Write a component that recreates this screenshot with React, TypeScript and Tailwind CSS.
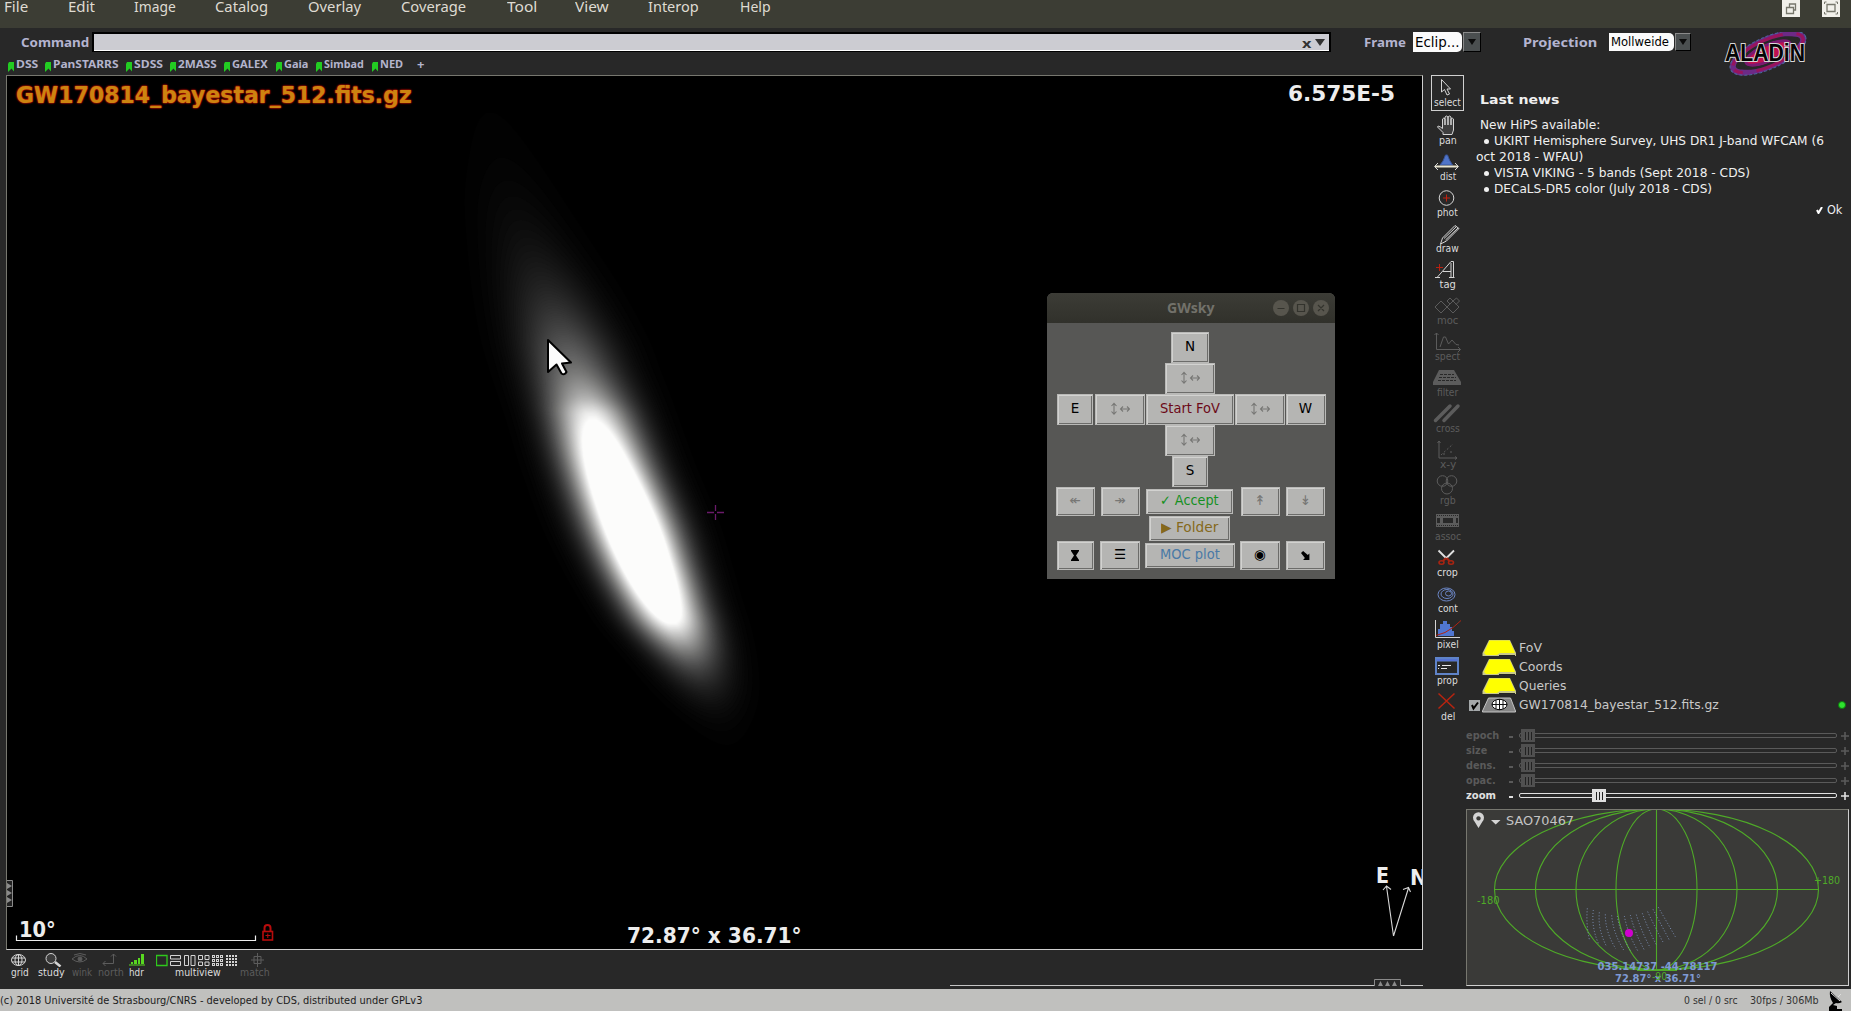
import { useLayoutEffect, useRef, useState } from "react";
import type { ReactNode } from "react";

/* Single line of text stretched to an exact width. */
function Fit({ w, className = "", children }: { w: number; className?: string; children: ReactNode }) {
  const ref = useRef<HTMLSpanElement>(null);
  const [k, setK] = useState(1);
  useLayoutEffect(() => {
    if (ref.current && ref.current.offsetWidth) setK(w / ref.current.offsetWidth);
  }, [w]);
  return (
    <span className={`block shrink-0 whitespace-nowrap ${className}`} style={{ width: w }}>
      <span ref={ref} className="inline-block origin-left align-top" style={{ transform: `scaleX(${k})` }}>
        {children}
      </span>
    </span>
  );
}

const MENU: [string, number, number][] = [
  ["File", 64, 24], ["Edit", 66, 27], ["Image", 81, 42], ["Catalog", 93, 53], ["Overlay", 93, 53],
  ["Coverage", 106, 65], ["Tool", 68, 30], ["View", 73, 34], ["Interop", 92, 51], ["Help", 60, 31],
];

function MenuBar() {
  return (
    <div className="flex h-7 shrink-0 bg-[#3c3d34] pl-1 font-['Noto_Sans',sans-serif] text-[14.500px] leading-[13px] text-[#dfdbd2]">
      {MENU.map(([t, cell, w]) => (
        <div key={t} className="shrink-0" style={{ width: cell }}>
          <Fit w={w}>{t}</Fit>
        </div>
      ))}
      <div className="ml-auto flex gap-[22px] pr-[11px]">
        <svg width="18" height="17" className="bg-[#f1f0ea]">
          <path d="M4.500 7.500h7v6h-7zM7.500 7v-3h6v6h-2" fill="none" stroke="#77776c" strokeWidth="1.300" />
        </svg>
        <svg width="18" height="17" className="bg-[#f1f0ea]">
          <path d="M5 4.500h8v7h-8z" fill="none" stroke="#77776c" strokeWidth="1.300" />
          <path d="M2.500 4v-2h2M13.500 2h2v2M15.500 12v2h-2M4.500 14h-2v-2" fill="none" stroke="#77776c" />
        </svg>
      </div>
    </div>
  );
}

const MARKS: [string, number, number][] = [
  ["DSS", 22, 37], ["PanSTARRS", 66, 81], ["SDSS", 29, 44], ["2MASS", 39, 54],
  ["GALEX", 36, 52], ["Gaia", 24, 40], ["Simbad", 40, 56], ["NED", 23, 45],
];

function Combo({ text, w, tw, small }: { text: string; w: number; tw: number; small?: boolean }) {
  return (
    <div className={`flex gap-px font-['DejaVu_Sans',sans-serif] font-normal text-black ${small ? "h-[18px] text-[12px] leading-[18px]" : "h-5 text-[14px] leading-5"}`}>
      <div className="rounded-r-[5px] bg-[#fbfbfb] pl-[2px]" style={{ width: w }}>
        <Fit w={tw}>{text}</Fit>
      </div>
      <div className={`flex items-center justify-center border border-[#8a8a8a] border-r-black border-b-black bg-[#4b4f50] ${small ? "w-4" : "w-[18px]"}`}>
        <svg width="8" height="6"><path d="M0 0h8l-4 6z" fill="#0c0c0c" /></svg>
      </div>
    </div>
  );
}

function Logo() {
  return (
    <svg width="84" height="46" viewBox="0 0 84 46" className="mt-1">
      <g transform="rotate(-24 45 21)" fill="none">
        <ellipse cx="45" cy="21" rx="38" ry="13" stroke="#6d2a86" strokeWidth="6" />
        <ellipse cx="45" cy="21" rx="38" ry="13" stroke="#98145c" strokeWidth="3" strokeDasharray="60 14 9 5" />
        <ellipse cx="45" cy="21" rx="41" ry="16" stroke="#4a6a9c" strokeWidth="1" strokeDasharray="3 2" />
        <ellipse cx="45" cy="21" rx="24" ry="8" fill="#c01050" stroke="#7a1a70" strokeWidth="3" />
        <ellipse cx="45" cy="21" rx="31" ry="10.500" stroke="#282828" strokeWidth="2" />
      </g>
      <text x="2" y="29" textLength="80" lengthAdjust="spacingAndGlyphs" fontFamily="Liberation Sans" fontWeight="bold" fontSize="23.500" fill="#050505" stroke="#d8d8d8" strokeWidth="2" paintOrder="stroke">
        ALADiN
      </text>
    </svg>
  );
}

function Header() {
  return (
    <div className="flex h-[47px] shrink-0">
      <div className="flex w-[1723px] flex-col">
        <div className="flex h-[29px] pt-1 pl-[21px] font-['Noto_Sans',sans-serif] text-[13px] font-bold leading-5 text-[#b4b4d0]">
          <Fit w={68}>Command</Fit>
          <div className="ml-[3px] flex h-5 w-[1239px] items-center justify-end gap-[3px] border-2 border-b border-black bg-[#ccccd2] pr-1 text-[13px] text-[#333] shadow-[inset_0_-1px_0_#fff]">
            <Fit w={10} className="leading-[14px]">x</Fit>
            <svg width="10" height="7"><path d="M0 0h10l-5 7z" fill="#333" /></svg>
          </div>
          <Fit w={42} className="ml-[33px]">Frame</Fit>
          <div className="ml-[7px]"><Combo text="Eclip..." w={49} tw={45} /></div>
          <Fit w={74} className="ml-[42px]">Projection</Fit>
          <div className="mt-px ml-3"><Combo text="Mollweide" w={65} tw={58} small /></div>
        </div>
        <div className="flex h-[17px] pl-2 font-['Noto_Sans',sans-serif] text-[10.500px] font-bold leading-[15px] text-[#b4b4cc]">
          {MARKS.map(([t, w, cell]) => (
            <div key={t} className="flex shrink-0 gap-[2px]" style={{ width: cell }}>
              <svg width="6" height="10" className="mt-[5px] shrink-0"><path d="M1 0h5v9.500l-2.500-3L0 10V2z" fill="#22cc22" /></svg>
              <Fit w={w}>{t}</Fit>
            </div>
          ))}
          <span className="text-[13px] leading-[14px]">+</span>
        </div>
      </div>
      <Logo />
    </div>
  );
}

/* Probability map: rows of [y, centre, sigma, amplitude], drawn as nested isophotes. */
const ROWS: [number, number, number, number][] = [
  [80, 482, 26, 0.005], [150, 500, 28, 0.014], [200, 514, 29, 0.034], [245, 530, 30, 0.072],
  [290, 547, 31, 0.15], [340, 565, 31, 0.32], [370, 575, 30, 0.47], [395, 584, 29, 0.68],
  [415, 591, 28, 0.96], [463, 607, 27.5, 1.38], [523, 630, 27.5, 1.66], [567, 647, 26.5, 1.58],
  [602, 662, 25.500, 1.3], [627, 674, 25, 0.94], [660, 691, 24, 0.38], [700, 709, 23, 0.08],
  [745, 727, 20, 0.008], [775, 738, 18, 0.002],
];

function cubic(i: number, t: number, get: (r: [number, number, number, number]) => number) {
  const p = (n: number) => ROWS[Math.max(0, Math.min(ROWS.length - 1, n))];
  const a = p(i), b = p(i + 1), z = p(i - 1), c = p(i + 2);
  const h = b[0] - a[0];
  const m0 = ((get(b) - get(z)) / (b[0] - z[0])) * h;
  const m1 = ((get(c) - get(a)) / (c[0] - a[0])) * h;
  return (2 * t ** 3 - 3 * t ** 2 + 1) * get(a) + (t ** 3 - 2 * t * t + t) * m0 + (-2 * t ** 3 + 3 * t * t) * get(b) + (t ** 3 - t * t) * m1;
}

function isophote(level: number) {
  const left: string[] = [];
  const right: string[] = [];
  for (let y = 80; y < 775; y += 1) {
    let i = 0;
    while (i < ROWS.length - 2 && ROWS[i + 1][0] <= y) i += 1;
    const t = (y - ROWS[i][0]) / (ROWS[i + 1][0] - ROWS[i][0]);
    const amp = Math.exp(cubic(i, t, (r) => Math.log(r[3])));
    if (amp <= level) continue;
    const cx = cubic(i, t, (r) => r[1]);
    const half = cubic(i, t, (r) => r[2]) * Math.sqrt(2 * Math.log(amp / level));
    left.push(`${(cx - half).toFixed(1)} ${y}`);
    right.push(`${(cx + half).toFixed(1)} ${y}`);
  }
  return left.length ? `M${left.join("L")}L${right.reverse().join("L")}Z` : "";
}

const LEVELS = Array.from({ length: 126 }, (_, n) => (n + 1) / 126);

function SkyMap() {
  return (
    <svg className="block" width="1415" height="873" viewBox="7 76 1415 873">
      {LEVELS.map((l) => {
        const v = Math.round(l * 252);
        return <path key={l} d={isophote(l)} fill={`rgb(${v},${v},${Math.round(v * 0.995)})`} />;
      })}
      <path d="M707 512.500h7M717 512.500h7M715.500 505v6M715.500 514v6" stroke="#6a1a6a" strokeWidth="1.300" />
      <path d="M548 340v32l8.500-7.500 5 9q3 2 5-1.500l-4.500-8.500 9-1z" fill="#fbfbfb" stroke="#000" strokeWidth="2" strokeLinejoin="round" />
      <path d="M16.500 935.500v5h239v-5" fill="none" stroke="#eee" strokeWidth="1.200" />
      <g fill="none" stroke="#d8d8d8" strokeWidth="1.100">
        <path d="M1393.500 936L1386.500 886.500M1383 890l3.500-4 4.500 3.500M1393.500 936L1408.500 888M1403 889.500l5.500-2 2 4.500" />
      </g>
      <g stroke="#b80c0c" fill="none">
        <path d="M264.500 931v-3a3 3 0 0 1 6 0v3" strokeWidth="2" />
        <rect x="263" y="931.500" width="9.500" height="8.500" strokeWidth="1.600" />
        <path d="M265.500 935.500h5M267.800 933.500v4.500" />
      </g>
      <path d="M7 880.500h5.500v26H7" fill="#222" stroke="#8a8a8a" />
      <path d="M7 883l5 3-5 3zM7 890l5 3-5 3zM7 897l5 3-5 3z" fill="#8a8a8a" />
    </svg>
  );
}

function Btn({ w, h, color = "text-[#777775]", className = "", children }: { w: number; h: number; color?: string; className?: string; children: ReactNode }) {
  return (
    <div
      className={`flex shrink-0 items-center justify-center border border-[#b9b9b7] bg-[#b5b5b3] pb-px shadow-[inset_1px_1px_0_#d2d2d0,inset_-1px_-1px_0_#6c6c6a] ${color} ${className}`}
      style={{ width: w, height: h }}
    >
      {children}
    </div>
  );
}

function Move() {
  return (
    <Btn w={50} h={31}>
      <svg width="20" height="14" fill="none" stroke="#777775" strokeWidth="1.100">
        <path d="M4 1.500v10M1.500 4L4 1.300 6.500 4M1.500 9.500L4 12.200 6.500 9.500M11 7h8M13 4.500L10.500 7l2.500 2.500M17 4.500L19.500 7 17 9.500" />
      </svg>
    </Btn>
  );
}

function GwSky() {
  return (
    <div className="absolute top-[217px] left-[1040px] flex h-[286px] w-[288px] flex-col overflow-hidden rounded-t-md bg-[#575755] font-['DejaVu_Sans',sans-serif] text-[13.500px] leading-none">
      <div className="relative flex h-[30px] shrink-0 items-center justify-center bg-gradient-to-b from-[#3c3c36] to-[#31312b]">
        <Fit w={48} className="mb-[2px] font-['Noto_Sans',sans-serif] text-[15px] font-bold text-[#72716a]">GWsky</Fit>
        <svg className="absolute top-[7px] right-[6px]" width="56" height="16">
          <g fill="#57554d"><circle cx="8" cy="8" r="8" /><circle cx="28" cy="8" r="8" /><circle cx="48" cy="8" r="8" /></g>
          <path d="M4.500 8.500h7M24.500 4.500h7v7h-7zM45 5l6 6M51 5l-6 6" fill="none" stroke="#33332d" strokeWidth="1.200" />
        </svg>
      </div>
      <div className="grid grid-cols-[40px_50px_90px_50px_41px] grid-rows-[31px_31px_31px_31px_31px_29px_25px_29px] place-items-center pt-[9px] pl-2">
        <i /><i /><Btn w={38} h={31} color="text-black">N</Btn><i /><i />
        <i /><i /><Move /><i /><i />
        <Btn w={36} h={31} color="text-black">E</Btn><Move />
        <Btn w={88} h={31} color="text-[#6c0a18]"><Fit w={60}>Start FoV</Fit></Btn>
        <Move /><Btn w={40} h={31} color="text-black">W</Btn>
        <i /><i /><Move /><i /><i />
        <i /><i /><Btn w={36} h={31} color="text-black">S</Btn><i /><i />
        <Btn w={39} h={29}>↞</Btn><Btn w={39} h={29}>↠</Btn>
        <Btn w={87} h={25} color="text-[#15901f]" className="mr-[2px]"><Fit w={59}>✓ Accept</Fit></Btn>
        <Btn w={39} h={29}>↟</Btn><Btn w={39} h={29}>↡</Btn>
        <i /><i /><Btn w={81} h={25} color="text-[#85691c]" className="mr-[2px]"><Fit w={57}>▶ Folder</Fit></Btn><i /><i />
        <Btn w={37} h={29} color="text-black">
          <svg width="8" height="11"><path d="M0 0h8v1L5 5.500 8 10v1H0v-1L3 5.500 0 1z" /></svg>
        </Btn>
        <Btn w={40} h={29} color="text-black">☰</Btn>
        <Btn w={90} h={25} color="text-[#4a7aa6]"><Fit w={60}>MOC plot</Fit></Btn>
        <Btn w={40} h={29} color="text-black">◉</Btn>
        <Btn w={39} h={29} color="text-black">
          <svg width="9" height="9"><path d="M0 2L2 0l4.500 4L8 2.500V9H2L3.700 7z" transform="scale(1.050 1)" /></svg>
        </Btn>
      </div>
    </div>
  );
}

function View() {
  const bold = "absolute font-['DejaVu_Sans',sans-serif] font-bold leading-6 text-[#ededed]";
  return (
    <div className="relative ml-[6px] h-[875px] w-[1417px] shrink-0 overflow-hidden border border-[#77776f] border-r-[#cfcfcf] border-b-[#cfcfcf] bg-black">
      <SkyMap />
      <div className={`${bold} top-[7px] left-[9px] text-[22.500px] text-[#cc8410]! [text-shadow:0_0_2px_#d01000,0_0_2px_#a01000,0_0_1px_#d01000]`}>
        <Fit w={396}>GW170814_bayestar_512.fits.gz</Fit>
      </div>
      <div className={`${bold} top-[6px] left-[1281px] text-[22px]`}><Fit w={107}>6.575E-5</Fit></div>
      <div className={`${bold} top-[842px] left-[12px] text-[20.500px]`}><Fit w={37}>10°</Fit></div>
      <div className={`${bold} top-[848px] left-[620px] text-[20.500px]`}><Fit w={175}>72.87° x 36.71°</Fit></div>
      <div className={`${bold} top-[788px] left-[1369px] text-[20.500px]`}><Fit w={13}>E</Fit></div>
      <div className={`${bold} top-[790px] left-[1403px] text-[20.500px]`}>N</div>
      <GwSky />
    </div>
  );
}

const G = "#5c5c5c";
const L = "#d4d4d4";
const TOOLS: [string, number, string, ReactNode][] = [
  ["select", 27, L, <path key="i" d="M10.500 4.500v12.500l3-2.500 2.500 5.500 2.500-1-2.500-5h3.500z" stroke={L} />],
  ["pan", 18, L, <path key="i" d="M12 23.500v-2l-5.500-5.500q0-2 3 0l2 1.500V8q1.500-2 2.500 0v6-8q1.500-2 3 0v8-8q1.500-2 3 0v8-6q1.500-1.500 2.500 0v11l-1.500 4.500z" stroke={L} fill="#3e3e3e" />],
  ["dist", 16, L, <g key="i"><path d="M9 18l3-4 2.500-6h2l2 5 3 5z" fill="#4f74c8" stroke="#38549a" /><path d="M4 19.500h23" stroke="#e8e4d0" strokeWidth="2" /><path d="M7 16l-3.500 3.500L7 23M24 16l3.500 3.500L24 23" stroke={L} /></g>],
  ["phot", 21, L, <g key="i"><circle cx="15.500" cy="15" r="7.300" stroke={L} /><path d="M12 15h7M15.500 11.500v7" stroke="#c02010" /></g>],
  ["draw", 23, L, <path key="i" d="M9.500 25l2-6L24 6.500l4 3L15.500 22l-6 3M13 19.500L25.500 7.500M14.500 21L27 9" stroke={L} />],
  ["tag", 16, L, <g key="i"><path d="M4 22.500h5M18 22.500h5.500M6.500 22L20 6.500h2.500V22M20 8v14M12 16.500h8" stroke={L} /><path d="M5 12.500h7M8.500 9v7" stroke="#b82010" /></g>],
  ["moc", 21, G, <path key="i" d="M4 16l6-6 6 6-6 6zM16 16l6-6 6 6-6 6zM13 13l6 6M13 19l6-6M10 10l3 3M16 10l3-3 3 3-3 3zM22 10l3.500-3 3 3-3.500 3.500" stroke={G} />],
  ["spect", 25, G, <path key="i" d="M3.500 8l2-2 2 2M5.500 6v16.500h24M27 20l2.500 2.500L27 25M9 20l3.500-10h2l3 7 3.500-4 4 4.500 3 .5" stroke={G} />],
  ["filter", 21, G, <g key="i"><path d="M8 7h15l7 12v3H2v-3z" fill={G} /><path d="M9 11.500h14M8 14.500h17M7 17.500h18" stroke="#282828" strokeDasharray="3 1" /></g>],
  ["cross", 24, G, <path key="i" d="M4.500 21.500L19 7M13 21.500L27 7" stroke={G} strokeWidth="3.500" strokeLinecap="round" />],
  ["x-y", 16, G, <g key="i"><path d="M6.500 8L8 6l1.500 2M8 6v17h18M24 21.500l2 1.500-2 1.500" stroke={G} /><path d="M10 20L22 9M12 19h4M19 17h3" stroke={G} strokeDasharray="2 2" /></g>],
  ["rgb", 16, G, <g key="i" stroke={G}><circle cx="11.500" cy="10" r="5.300" /><circle cx="20.500" cy="10" r="5.300" /><circle cx="16" cy="17.500" r="5.500" /></g>],
  ["assoc", 26, G, <g key="i"><path d="M5 7h23v13H5z" fill={G} /><path d="M6 8.500h21M6 18.500h21" stroke="#282828" strokeDasharray="1 1" /><path d="M6 11h3v5H6zM12 11h10v5H12zM25 11h2v5h-2z" fill="#282828" /></g>],
  ["crop", 21, L, <g key="i"><path d="M7.500 7.500l8 8M23 7.500l-8 8" stroke="#e0e0e0" strokeWidth="1.800" /><path d="M15 15l-3 3M15.500 15l3 3" stroke="#a82412" strokeWidth="2" /><ellipse cx="10.500" cy="19.500" rx="2.500" ry="1.700" stroke="#a82412" strokeWidth="1.600" /><ellipse cx="20" cy="19.500" rx="2.500" ry="1.700" stroke="#a82412" strokeWidth="1.600" /></g>],
  ["cont", 20, L, <g key="i" stroke="#6b86c6"><ellipse cx="15.500" cy="15.500" rx="8.500" ry="6.500" /><ellipse cx="16" cy="15" rx="6" ry="4.500" /><ellipse cx="17.500" cy="14.500" rx="3" ry="2.500" /></g>],
  ["pixel", 22, L, <g key="i"><path d="M7 21v-7h2V9h3V6h4v3h3v3h2v4h2v5z" fill="#5076d0" /><path d="M4.500 5v17.500H29" stroke={L} /><path d="M5 20.500l9-3 8-5 8-7" stroke="#b02412" /></g>],
  ["prop", 21, L, <g key="i"><path d="M5 7h22v16H5z" stroke="#5f83c8" strokeWidth="2" /><path d="M5 8h22v2H5z" fill="#4c63e0" stroke="#5f83c8" /><path d="M7 14.500h2M11 14.500h9M7 17.500h1M10 17.500h6" stroke="#e8e8e8" /></g>],
  ["del", 14, L, <path key="i" d="M7.500 6.500l16 15M23.500 6.500l-16 15" stroke="#b82410" strokeWidth="1.500" />],
];

function Toolbar() {
  return (
    <div className="flex w-[41px] shrink-0 flex-col pl-2 font-['DejaVu_Sans',sans-serif] text-[10px] leading-[10px]">
      {TOOLS.map(([t, w, c, icon], i) => (
        <div key={t} className={`relative flex h-9 w-[33px] flex-col items-center ${i === 0 ? "outline-1 -outline-offset-1 outline-[#d0d0d0]" : ""}`}>
          <svg width="33" height="25" viewBox="0 0 33 25" fill="none" className="shrink-0">{icon}</svg>
          <div className={`${i === 0 ? "-mt-[2px]" : i < 6 ? "mt-0" : "-mt-[0.500px]"} ${c === G ? "text-[#5c5c5c]" : "text-[#dcdcdc]"}`}><Fit w={w}>{t}</Fit></div>
        </div>
      ))}
    </div>
  );
}

const CELL = "flex flex-col gap-px";
function BottomBar() {
  return (
    <div className="flex h-[39px] shrink-0 justify-between font-['DejaVu_Sans',sans-serif] text-[10px] leading-[10px] text-[#dcdcdc]">
      <div className="flex pt-[3px]">
        <div className={`${CELL} ml-[11px] w-[27px]`}>
          <svg width="16" height="14" fill="none" stroke={L}><ellipse cx="7.500" cy="7" rx="7" ry="5.500" /><ellipse cx="7.500" cy="7" rx="3.500" ry="5.500" /><path d="M7.500 1v12M1 5h13M1 9h13" /></svg>
          <Fit w={18}>grid</Fit>
        </div>
        <div className={`${CELL} w-[34px]`}>
          <svg width="26" height="14" fill="none" stroke={L}><circle cx="13" cy="5.500" r="5" fill="#3c3c3c" /><path d="M17 9l5.500 4.500" strokeWidth="2.500" /></svg>
          <Fit w={27}>study</Fit>
        </div>
        <div className={`${CELL} w-[26px] text-[#5c5c5c]`}>
          <svg width="16" height="14" fill="none" stroke={G}><path d="M0 6q8-7 15 0q-7 6-15 0M2 2q6-3 12 0" /><circle cx="8" cy="6" r="2" fill={G} /></svg>
          <Fit w={20}>wink</Fit>
        </div>
        <div className={`${CELL} w-[31px] text-[#5c5c5c]`}>
          <svg width="20" height="14" fill="none" stroke={G}><path d="M5 10.500h10.500V1M13 3.500L15.500 1 18 3.500M7.500 8L5 10.500 7.500 13" /></svg>
          <Fit w={26}>north</Fit>
        </div>
        <div className={`${CELL} w-[27px]`}>
          <svg width="18" height="14"><path d="M0 12.500h16v-1H0zM2 9h2v3H2zM5 7h3v5H5zM9 5h2v7H9zM12 1h3v11h-3z" fill="#58d820" /></svg>
          <Fit w={15}>hdr</Fit>
        </div>
        <div className={`${CELL} w-[84px]`}>
          <svg width="84" height="14" fill="none" stroke={L}>
            <path d="M.5 2.500h10.500v10H.5z" stroke="#2fc81c" strokeWidth="1.300" />
            <path d="M14.500 2.500h10v3.500h-10zM14.500 8.500h10v4h-10zM28.500 2.500h4v10h-4zM35 2.500h4v10h-4zM42.500 2.500h4v4h-4zM49 2.500h4v4h-4zM42.500 9h4v3.500h-4zM49 9h4v3.500h-4z" />
            <path d="M56 3.500h12M56 7.500h12M56 11.500h12" strokeWidth="3" strokeDasharray="3 1" />
            <path d="M57 3.500h10M57 7.500h10M57 11.500h10" strokeWidth="1" strokeDasharray="1 3" stroke="#282828" />
            <path d="M70 3h12M70 6h12M70 9h12M70 12h12" strokeWidth="2" strokeDasharray="2 1" />
          </svg>
          <Fit w={46} className="ml-[19px]">multiview</Fit>
        </div>
        <div className={`${CELL} w-[30px] text-[#5c5c5c]`}>
          <svg width="26" height="14" fill="none" stroke={G}><path d="M11 7h13M17.500 0v14M14 3.500h7v7h-7z" /></svg>
          <Fit w={30}>match</Fit>
        </div>
      </div>
      <svg width="473" height="12" className="mt-[27px]" fill="none">
        <path d="M0 8.500h424M451 8.500h22" stroke="#c4c4c4" />
        <path d="M424.500 9V2.500h26V9" stroke="#8a8a8a" />
        <path d="M428 9l2.500-5 2.500 5zM435 9l2.500-5 2.500 5zM442 9l2.500-5 2.500 5z" fill="#8a8a8a" />
      </svg>
    </div>
  );
}

function News() {
  return (
    <div className="flex h-[564px] shrink-0 flex-col pt-[17px] pl-[10px] font-['DejaVu_Sans',sans-serif] text-[12px] leading-4 text-[#f0f0f0]">
      <Fit w={79} className="ml-[4px] text-[13px] font-bold">Last news</Fit>
      <Fit w={120} className="mt-[9px] ml-1">New HiPS available:</Fit>
      {[["UKIRT Hemisphere Survey, UHS DR1 J-band WFCAM (6", 330, "oct 2018 - WFAU)"], ["VISTA VIKING - 5 bands (Sept 2018 - CDS)", 256, ""], ["DECaLS-DR5 color (July 2018 - CDS)", 218, ""]].map(([t, w, rest]) => (
        <div key={t as string}>
          <div className="ml-2 flex items-center gap-[5px]">
            <span className="size-[5px] rounded-full bg-[#f0f0f0]" />
            <Fit w={w as number}>{t}</Fit>
          </div>
          {rest && <Fit w={107}>{rest}</Fit>}
        </div>
      ))}
      <div className="mt-[5px] mr-[9px] flex items-center gap-1 self-end">
        <svg width="7" height="7"><path d="M1 3l1.500 3L6 0" stroke="#fff" strokeWidth="2" fill="none" /></svg>
        <Fit w={15}>Ok</Fit>
      </div>
    </div>
  );
}

function Layers() {
  return (
    <div className="flex shrink-0 flex-col font-['DejaVu_Sans',sans-serif] text-[12.500px] text-[#c8c8c8]">
      {([["FoV", 23], ["Coords", 43], ["Queries", 47], ["GW170814_bayestar_512.fits.gz", 200]] as [string, number][]).map(([t, w], i) => (
        <div key={t} className="flex h-[19px] items-start pl-[3px] leading-[18px]">
          <span className="mt-1 flex size-[11px] items-center justify-center">
            {i === 3 && <svg width="11" height="11"><path d="M0 0h11v11H0z" fill="#a4a8aa" /><path d="M3 5l1.500 3.500L9 2.500" stroke="#000" strokeWidth="2" fill="none" /></svg>}
          </span>
          <svg width="34" height="18" className="ml-[2px]">
            {i < 3 ? (
              <g><path d="M7 1h21l6 13v3H.5v-3z" fill="#c9c98c" /><path d="M7.500 1.500h20l5.500 12.500H18l-3 2H4l-2-2z" fill="#ffff00" /><path d="M17 16.500h16" stroke="#222" /></g>
            ) : (
              <g><path d="M6.500 2h22l5 13v1H.5v-1z" fill="#858585" stroke="#c4c4c4" /><ellipse cx="17.500" cy="8.500" rx="7.500" ry="5.200" fill="#fff" stroke="#000" /><path d="M10 8.500h15M17.500 3v11M14 4v9M21 4v9" stroke="#111" /></g>
            )}
          </svg>
          <Fit w={w} className="ml-[3px]">{t}</Fit>
          {i === 3 && <span className="mt-[5px] mr-[5px] ml-auto size-2 rounded-full border border-[#0c7a0c] bg-[#2fe32f]" />}
        </div>
      ))}
    </div>
  );
}

function Sliders() {
  return (
    <div className="mt-[13px] flex shrink-0 flex-col font-['DejaVu_Sans',sans-serif] text-[11px] font-bold leading-[15px]">
      {([["epoch", 33, 1], ["size", 21, 1], ["dens.", 30, 1], ["opac.", 30, 1], ["zoom", 30, 72]] as [string, number, number][]).map(([t, w, x], i) => {
        const on = i === 4;
        return (
          <div key={t} className={`flex h-[15px] items-center ${on ? "text-[#e0e0e0]" : "text-[#5a5a5a]"}`}>
            <div className="w-[43px]"><Fit w={w}>{t}</Fit></div>
            <span className={`mt-[2px] h-[2px] w-1 ${on ? "bg-[#e0e0e0]" : "bg-[#5a5a5a]"}`} />
            <div className={`relative ml-[6px] h-[5px] w-[318px] rounded-[2px] border ${on ? "border-[#e0e0e0]" : "border-[#5a5a5a]"}`}>
              <div className={`absolute -top-[5px] flex h-[13px] w-[14px] items-center justify-center gap-[2px] ${on ? "bg-[#e0e0e0]" : "bg-[#505050]"}`} style={{ left: x }}>
                <span className="h-2 w-px bg-[#222]" /><span className="h-2 w-px bg-[#222]" /><span className="h-2 w-px bg-[#222]" />
              </div>
            </div>
            <svg width="8" height="8" className="mt-px ml-[4px]"><path d="M0 4h8M4 0v8" stroke="currentColor" strokeWidth="1.600" /></svg>
          </div>
        );
      })}
    </div>
  );
}

/* Footprint columns over the all-sky map: top x/y, bottom x/y, bow. */
const FIELD: [number, number, number, number, number][] = [
  [397, 325, 404, 422, -4], [415, 330, 430, 430, -7], [433, 337, 455, 440, -8], [451, 343, 482, 446, -8],
  [470, 346, 506, 450, -7], [487, 348, 526, 452, -6], [508, 348, 548, 452, -5], [526, 345, 568, 450, -4],
  [544, 344, 586, 444, -3], [562, 340, 606, 438, -2], [578, 335, 626, 430, -1], [594, 328, 644, 422, 0], [610, 322, 662, 412, 0],
];

function AllSky() {
  return (
    <div className="mt-[6px] h-[177px] w-[383px] shrink-0 border border-[#77776f] border-r-[#cfcfcf] border-b-[#cfcfcf] bg-[#3a3a38]">
      <svg className="block" width="381" height="175" viewBox="1467 810 381 175" fill="none">
        <g stroke="#4faa28" strokeWidth="1.100">
          <ellipse cx="1656.500" cy="889.500" rx="162" ry="80.500" />
          <ellipse cx="1656.500" cy="889.500" rx="121" ry="80.500" />
          <ellipse cx="1656.500" cy="889.500" rx="80.500" ry="80.500" />
          <ellipse cx="1656.500" cy="889.500" rx="40.500" ry="80.500" />
          <path d="M1494.500 889.500h324M1656.500 810v160M1637 970.500h40" />
        </g>
        <g stroke="#8094bc" strokeWidth="1" strokeDasharray="1 2">
          {FIELD.map(([x1, y1, x2, y2, b]) => (
            <path key={x1} d={`M${1455 + x1 / 3} ${800 + y1 / 3}Q${1455 + ((x1 + x2) / 2 + b * 2) / 3} ${800 + (y1 + y2) / 6} ${1455 + x2 / 3} ${800 + y2 / 3}`} />
          ))}
        </g>
        <circle cx="1629" cy="933" r="4" fill="#d000d0" />
        <path d="M1478.500 828l-4-6.500a5.500 5.500 0 1 1 8 0zM1478.500 816.200a2.200 2.200 0 1 0 .01 0z" fill="#d4d4d4" fillRule="evenodd" />
        <path d="M1491 820h9.500l-4.800 4.500z" fill="#d4d4d4" />
        <g fontFamily="DejaVu Sans">
          <text x="1506" y="825" fontSize="12.500" textLength="68" lengthAdjust="spacingAndGlyphs" fill="#c4c4c4">SAO70467</text>
          <text x="1477" y="904" fontSize="10" textLength="22.500" lengthAdjust="spacingAndGlyphs" fill="#4faa28">-180</text>
          <text x="1814" y="884" fontSize="10" textLength="26" lengthAdjust="spacingAndGlyphs" fill="#4faa28">+180</text>
          <text x="1597.500" y="970" fontSize="10" fontWeight="bold" textLength="120" lengthAdjust="spacingAndGlyphs" fill="#7f9ad4">035.14737 -44.78117</text>
          <text x="1615" y="982" fontSize="10" fontWeight="bold" textLength="86" lengthAdjust="spacingAndGlyphs" fill="#7f9ad4">72.87° x 36.71°</text>
          <text x="1652" y="980" fontSize="10" textLength="15" lengthAdjust="spacingAndGlyphs" fill="#4faa28">-90</text>
        </g>
      </svg>
    </div>
  );
}

function StatusBar() {
  return (
    <div className="flex h-[22px] shrink-0 bg-[#c0c0be] font-['DejaVu_Sans',sans-serif] text-[10px] leading-[24px] text-[#1c1c1c]">
      <Fit w={422}>(c) 2018 Université de Strasbourg/CNRS - developed by CDS, distributed under GPLv3</Fit>
      <Fit w={54} className="ml-auto text-[#333]">0 sel / 0 src</Fit>
      <Fit w={69} className="ml-3 text-[#333]">30fps / 306Mb</Fit>
      <svg width="16" height="20" className="mt-[2px] mr-[7px] ml-[9px]">
        <path d="M2 0l12 11q-3 2-6 1l-3 2 4 1v3h5v2H1v-4l4-4Q1 6 2 0z" fill="#000" />
        <path d="M3 2l9 8M10 6l3-3" stroke="#ddd" />
      </svg>
    </div>
  );
}

export default function App() {
  return (
    <div className="flex h-[1011px] w-[1851px] flex-col overflow-hidden bg-[#282828]">
      <MenuBar />
      <Header />
      <div className="flex h-[914px] shrink-0">
        <div className="flex w-[1423px] shrink-0 flex-col">
          <View />
          <BottomBar />
        </div>
        <Toolbar />
        <div className="ml-[2px] flex w-[385px] flex-col">
          <News />
          <Layers />
          <Sliders />
          <AllSky />
        </div>
      </div>
      <StatusBar />
    </div>
  );
}
